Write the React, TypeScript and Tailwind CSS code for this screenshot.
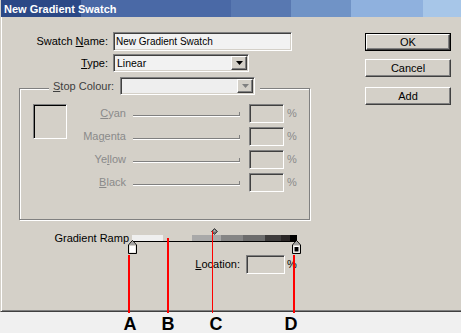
import React from "react";

const sunken =
  "border border-t-[#808080] border-l-[#808080] border-b-white border-r-white shadow-[inset_1px_1px_0_#404040,inset_-1px_-1px_0_#d4d0c8]";
const raised =
  "border border-t-white border-l-white border-b-[#404040] border-r-[#404040] shadow-[inset_-1px_-1px_0_#808080] bg-[#d4d0c8]";

const Arrow = ({ color }: { color: string }) => (
  <svg width="7" height="4" viewBox="0 0 7 4">
    <polygon points="0,0 7,0 3.5,4" fill={color} />
  </svg>
);

const DropButton = ({ disabled }: { disabled?: boolean }) => (
  <div className={`${raised} w-[16px] h-full flex items-center justify-center`}>
    <Arrow color={disabled ? "#808080" : "#000"} />
  </div>
);

const Slider = () => (
  <svg width="107" height="19" viewBox="0 0 107 19" className="block">
    <line x1="0" y1="11.5" x2="107" y2="11.5" stroke="#808080" />
    <line x1="0" y1="12.5" x2="107" y2="12.5" stroke="#ffffff" />
    <line x1="106.5" y1="8" x2="106.5" y2="12" stroke="#808080" />
  </svg>
);

const Stop = ({ fill }: { fill: "white" | "black" }) => (
  <svg width="9" height="14" viewBox="0 0 9 14" className="block">
    <polygon points="4.5,0.5 8.5,5 8.5,13.5 0.5,13.5 0.5,5" fill="#d4d0c8" stroke="#000" />
    <polygon points="4.5,1.8 7.4,5 1.6,5" fill="#a0a0a0" />
    {fill === "white" ? (
      <rect x="1.5" y="6" width="6" height="6.5" fill="#ffffff" />
    ) : (
      <>
        <rect x="1.5" y="6" width="6" height="6.5" fill="#ffffff" />
        <rect x="2.5" y="7" width="4" height="4.5" fill="#000" />
      </>
    )}
  </svg>
);

const cmyk = [
  { pre: "", u: "C", post: "yan" },
  { pre: "Ma", u: "g", post: "enta" },
  { pre: "Ye", u: "l", post: "low" },
  { pre: "", u: "B", post: "lack" },
];

const ramp = [
  { w: "w-[31px]", c: "bg-[#efefef]" },
  { w: "w-[29px]", c: "bg-[#d4d0c8]" },
  { w: "w-[29px]", c: "bg-[#a9a9a9]" },
  { w: "w-[22px]", c: "bg-[#858585]" },
  { w: "w-[22px]", c: "bg-[#6c6c6c]" },
  { w: "w-[16px]", c: "bg-[#3e3c3c]" },
  { w: "w-[9px]", c: "bg-[#2a2626]" },
  { w: "w-[7px]", c: "bg-black" },
];

export default function App() {
  return (
    <div className="relative w-[461px] h-[333px] overflow-hidden bg-[#f0f0f0] font-['Liberation_Sans',Arial,sans-serif] text-[11px] leading-[13px] text-black">
      {/* dialog */}
      <div className="h-[312px] bg-[#d4d0c8] border-l border-l-[#d4d0c8] border-b border-b-[#404040] shadow-[inset_1px_0_0_#fff,inset_0_-1px_0_#808080]">
        <div className="h-[17px] pl-[3px] pt-[1px] flex items-center font-bold text-white bg-[linear-gradient(to_right,#2b4886_0_80px,#4a69a6_80px_230px,#5878b1_230px_290px,#7093c6_290px_350px,#8fb1de_350px_422px,#a7c6e8_422px)]">
          New Gradient Swatch
        </div>

        <div className="flex pt-[15px]">
          {/* left side */}
          <div className="w-[364px]">
            <div className="flex items-center h-[19px]">
              <div className="w-[107px] text-right">
                Swatch <span className="underline">N</span>ame:
              </div>
              <div className={`${sunken} ml-[5px] w-[179px] h-[19px] bg-[#f2f2f2] pl-[2px] flex items-center text-[10px]`}>
                New Gradient Swatch
              </div>
            </div>

            <div className="flex items-center h-[18px] mt-[3px]">
              <div className="w-[107px] text-right">
                <span className="underline">T</span>ype:
              </div>
              <div className={`${sunken} ml-[5px] w-[136px] h-[18px] bg-[#f2f2f2] p-[1px] flex`}>
                <div className="flex-1 pl-[2px] flex items-center text-[10.5px]">Linear</div>
                <DropButton />
              </div>
            </div>

            {/* group box */}
            <div className="relative mt-[16px] ml-[18px] w-[291px] h-[132px] border border-[#808080] shadow-[inset_1px_1px_0_#fff,1px_1px_0_#fff]">
              <div className="absolute top-[-12px] left-[29px] h-[18px] pl-[4px] pr-[5px] flex items-center bg-[#d4d0c8]">
                <span className="text-[#404040]">
                  <span className="underline">S</span>top Colour:
                </span>
                <div className={`${sunken} ml-[6px] w-[135px] h-[18px] bg-[#eeeeee] p-[1px] flex`}>
                  <div className="flex-1" />
                  <DropButton disabled />
                </div>
              </div>

              <div className="flex pt-[15px] pl-[13px]">
                <div className="w-[34px] h-[35px] border border-t-[#808080] border-l-[#808080] border-b-white border-r-white shadow-[inset_1px_1px_0_#000]" />
                <div className="flex flex-col gap-[4px]">
                  {cmyk.map((r) => (
                    <div key={r.u + r.post} className="flex items-center h-[19px]">
                      <div className="w-[59px] text-right text-[#8a8a8a]">
                        {r.pre}
                        <span className="underline">{r.u}</span>
                        {r.post}
                      </div>
                      <div className="ml-[7px]">
                        <Slider />
                      </div>
                      <div className={`${sunken} ml-[9px] w-[35px] h-[19px]`} />
                      <div className="ml-[3px] text-[#8a8a8a]">%</div>
                    </div>
                  ))}
                </div>
              </div>
            </div>

            {/* gradient ramp */}
            <div className="flex items-center h-[7px] mt-[15px]">
              <div className="w-[128px] text-right">Gradient Ramp</div>
              <div className="relative ml-[3px] flex w-[165px] h-[7px] border-b border-black">
                {ramp.map((s, i) => (
                  <div key={i} className={`${s.w} ${s.c} h-full`} />
                ))}
                <svg width="7" height="7" viewBox="0 0 7 7" className="absolute left-[79px] top-[-7px]">
                  <polygon points="3.5,0.5 6.5,3.5 3.5,6.5 0.5,3.5" fill="#6a6a6a" stroke="#404040" />
                  <polygon points="3.5,1.8 5,3.5 3.5,3.5 2,3.5" fill="#c8c8c8" />
                </svg>
                <div className="absolute left-[-4px] top-[5px]">
                  <Stop fill="white" />
                </div>
                <div className="absolute left-[160px] top-[5px]">
                  <Stop fill="black" />
                </div>
              </div>
            </div>

            <div className="flex items-center h-[19px] mt-[13px]">
              <div className="w-[239px] text-right">
                <span className="underline">L</span>ocation:
              </div>
              <div className={`${sunken} ml-[6px] w-[39px] h-[19px]`} />
              <div className="ml-[2px]">%</div>
            </div>
          </div>

          {/* buttons */}
          <div className="w-[86px] pt-[1px] flex flex-col">
            <div className="border border-black h-[18px]">
              <div className={`${raised} h-full flex items-center justify-center`}>OK</div>
            </div>
            <div className={`${raised} h-[18px] mt-[8px] flex items-center justify-center`}>Cancel</div>
            <div className={`${raised} h-[18px] mt-[10px] flex items-center justify-center`}>Add</div>
          </div>
        </div>
      </div>

      {/* callout lines */}
      <div className="absolute left-[128px] top-[255px] w-[2px] h-[58px] bg-[#ff0000]" />
      <div className="absolute left-[167px] top-[238px] w-[2px] h-[75px] bg-[#ff0000]" />
      <div className="absolute left-[212px] top-[231px] w-[1px] h-[82px] bg-[#ff0000]" />
      <div className="absolute left-[293px] top-[255px] w-[2px] h-[58px] bg-[#ff0000]" />

      {/* callout letters */}
      {[
        { l: "A", x: "left-[120px]" },
        { l: "B", x: "left-[158px]" },
        { l: "C", x: "left-[206px]" },
        { l: "D", x: "left-[281px]" },
      ].map((c) => (
        <div
          key={c.l}
          className={`absolute ${c.x} top-[315px] w-[20px] text-center font-bold text-[18px] leading-[18px] font-['Liberation_Sans_Narrow','Liberation_Sans',sans-serif]`}
        >
          {c.l}
        </div>
      ))}
    </div>
  );
}
